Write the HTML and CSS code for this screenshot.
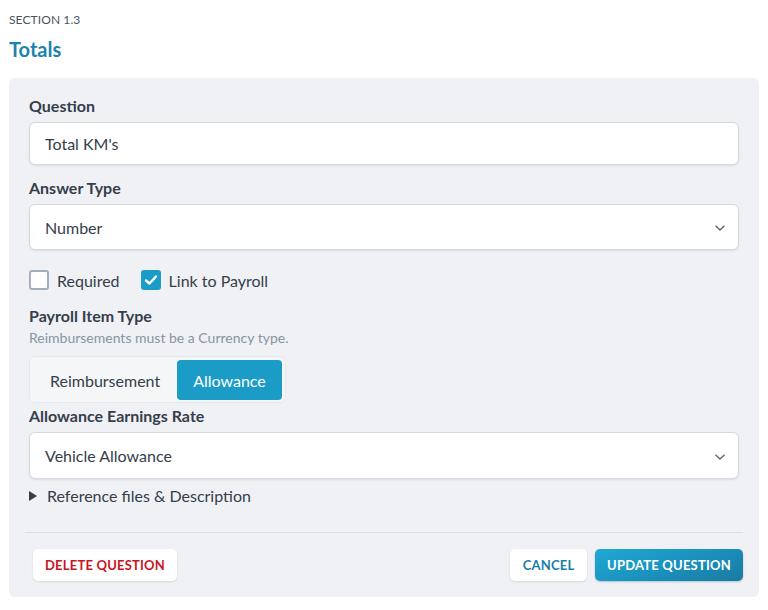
FILE: index.html
```html
<!DOCTYPE html>
<html>
<head>
<meta charset="utf-8">
<link rel="stylesheet" href="styles.css">
</head>
<body>
<div class="page">
  <div class="section-label">SECTION 1.3</div>
  <h1 class="section-title">Totals</h1>
  <div class="panel">
    <div class="field">
      <label class="label">Question</label>
      <div class="input">Total KM's</div>
    </div>
    <div class="field field-gap">
      <label class="label">Answer Type</label>
      <div class="select">
        <span>Number</span>
        <svg class="chev" width="12" height="8" viewBox="0 0 12 8"><path d="M1.5 1.8 L6 6 L10.5 1.8" fill="none" stroke="#5d6878" stroke-width="1.4"/></svg>
      </div>
    </div>
    <div class="checks">
      <div class="check"><span class="box"></span><span>Required</span></div>
      <div class="check"><span class="box checked"><svg width="14" height="12" viewBox="0 0 14 12"><path d="M2 6.5 L5.5 9.5 L12 2.5" fill="none" stroke="#fff" stroke-width="2.4" stroke-linecap="round" stroke-linejoin="round"/></svg></span><span>Link to Payroll</span></div>
    </div>
    <div class="field payroll">
      <label class="label">Payroll Item Type</label>
      <div class="hint">Reimbursements must be a Currency type.</div>
      <div class="segmented">
        <div class="seg">Reimbursement</div>
        <div class="seg active">Allowance</div>
      </div>
    </div>
    <div class="field rate">
      <label class="label">Allowance Earnings Rate</label>
      <div class="select">
        <span>Vehicle Allowance</span>
        <svg class="chev" width="12" height="8" viewBox="0 0 12 8"><path d="M1.5 1.8 L6 6 L10.5 1.8" fill="none" stroke="#5d6878" stroke-width="1.4"/></svg>
      </div>
    </div>
    <div class="disclosure"><span class="tri"></span>Reference files &amp; Description</div>
    <div class="footer">
      <button class="btn btn-delete">DELETE QUESTION</button>
      <div class="right">
        <button class="btn btn-cancel">CANCEL</button>
        <button class="btn btn-update">UPDATE QUESTION</button>
      </div>
    </div>
  </div>
</div>
</body>
</html>
```

FILE: styles.css
```css
* { box-sizing: border-box; }
html, body { margin: 0; padding: 0; background: #fff; }
body { font-family: Lato, "Open Sans", sans-serif; color: #353e4a; }
.page { padding: 0 9px; }
.section-label {
  font-size: 12px; line-height: 14px; color: #4a5361; letter-spacing: 0.1px;
  padding-top: 13px;
}
.section-title {
  margin: 0; font-size: 20px; line-height: 24px; font-weight: 700; color: #1b83ad;
  padding-top: 10px;
}
.panel {
  margin-top: 17px;
  background: #f0f1f5;
  border-radius: 6px;
  padding: 18px 20px 16px 20px;
}
.field { display: flex; flex-direction: column; }
.label { font-size: 16px; line-height: 20px; font-weight: 700; color: #353e4a; }
.input, .select {
  margin-top: 6px;
  background: #fff;
  border: 1px solid #d3d9e2;
  border-radius: 6px;
  box-shadow: 0 1px 2px rgba(60, 70, 90, 0.12);
  font-size: 16px;
  color: #353e4a;
  padding: 0 15px;
  display: flex; align-items: center;
}
.input { height: 43px; }
.select { height: 46px; justify-content: space-between; }
.chev { margin-right: -3px; margin-top: 2px; }
.field-gap { margin-top: 13px; }
.checks { display: flex; gap: 21px; margin-top: 20px; height: 20px; align-items: center; }
.check { display: flex; align-items: center; gap: 8px; font-size: 16px; color: #353e4a; }
.box {
  width: 20px; height: 20px; border: 2px solid #a3afc0; border-radius: 3px; background: #fff;
  display: inline-flex; align-items: center; justify-content: center;
}
.box.checked { background: #1a9cc7; border-color: #1a9cc7; }
.payroll { margin-top: 16px; }
.hint { font-size: 14px; line-height: 16px; color: #8a94a4; margin-top: 4px; }
.segmented {
  margin-top: 10px;
  align-self: flex-start;
  display: flex;
  background: #f5f6f8;
  border: 1px solid #e6e8ed;
  border-radius: 6px;
  padding: 3px;
  height: 47px;
}
.seg {
  font-size: 16px; color: #353e4a; display: flex; align-items: center;
  padding: 0 17px 0 17px; border-radius: 4px; height: 40px;
}
.seg.active { background: #1a9cc7; color: #fff; padding: 0 16px; }
.rate { margin-top: 3px; }
.rate .select { height: 47px; }
.disclosure {
  margin-top: 7px; font-size: 16px; line-height: 20px; color: #353e4a;
  display: flex; align-items: center;
}
.tri {
  width: 0; height: 0; border-left: 8px solid #353e4a;
  border-top: 5px solid transparent; border-bottom: 5px solid transparent;
  margin-right: 10px;
}
.footer {
  margin: 26px -4px 0 -4px;
  border-top: 1px solid #dcdfe5;
  padding-top: 16px;
  display: flex; justify-content: space-between; align-items: center;
}
.btn {
  font-family: Lato, "Open Sans", sans-serif;
  font-size: 13px; font-weight: 700; letter-spacing: 0.2px;
  height: 32px; border: none; border-radius: 5px; padding: 0 12px; cursor: pointer;
}
.btn-delete {
  margin-left: 8px; background: #fff; color: #c8151f;
  box-shadow: 0 1px 2px rgba(60, 70, 90, 0.15);
  width: 144px;
}
.right { display: flex; gap: 8px; }
.btn-cancel {
  background: #fff; color: #1a7ea6; width: 77px;
  box-shadow: 0 1px 2px rgba(60, 70, 90, 0.15);
}
.btn-update {
  color: #fff; width: 148px;
  background: linear-gradient(160deg, #1fa9d4 0%, #1a90bc 55%, #1a7aa0 100%);
  box-shadow: 0 1px 2px rgba(20, 60, 90, 0.25);
}
```
